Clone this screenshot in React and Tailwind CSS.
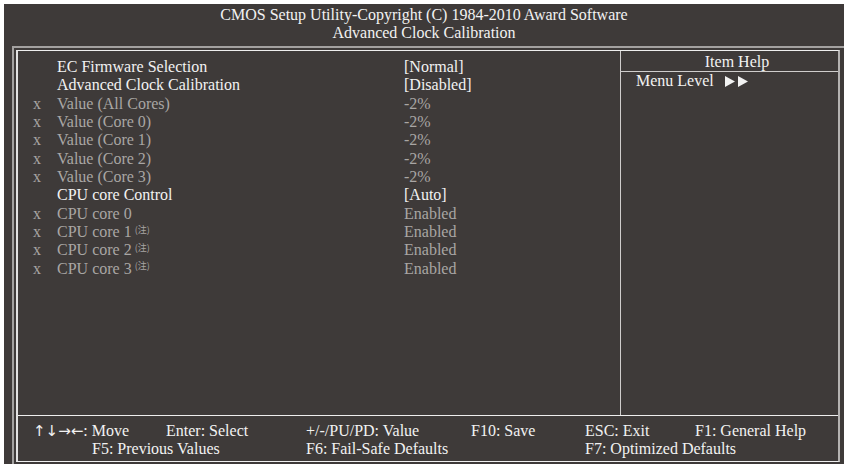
import React from "react";

const rows = [
  { label: "EC Firmware Selection", value: "[Normal]", active: true },
  { label: "Advanced Clock Calibration", value: "[Disabled]", active: true },
  { label: "Value (All Cores)", value: "-2%" },
  { label: "Value (Core 0)", value: "-2%" },
  { label: "Value (Core 1)", value: "-2%" },
  { label: "Value (Core 2)", value: "-2%" },
  { label: "Value (Core 3)", value: "-2%" },
  { label: "CPU core Control", value: "[Auto]", active: true },
  { label: "CPU core 0", value: "Enabled" },
  { label: "CPU core 1", value: "Enabled", note: true },
  { label: "CPU core 2", value: "Enabled", note: true },
  { label: "CPU core 3", value: "Enabled", note: true },
];

// rows are ~18.3px apart, so every third one gets an extra pixel
const SettingRow = ({ row, tall }) => (
  <div
    className={
      "flex items-center " +
      (tall ? "h-[19px] " : "h-[18px] ") +
      (row.active ? "text-[#f2f2f2]" : "text-[#a9a6a4]")
    }
  >
    <span className="w-[24px] pl-[15px] shrink-0">{row.active ? "" : "x"}</span>
    <span className="w-[362px] shrink-0 pl-[15px] whitespace-nowrap">
      {row.label}
      {row.note && (
        <sup className="ml-[3px] text-[9px] font-['Noto_Sans_CJK_SC',serif]">(注)</sup>
      )}
    </span>
    <span className="whitespace-nowrap">{row.value}</span>
  </div>
);

const Arrow = () => (
  <svg width="10" height="11" viewBox="0 0 10 11">
    <path d="M0 0 L10 5.5 L0 11 Z" fill="#f2f2f2" />
  </svg>
);

const App = () => {
  return (
    <div className="w-[844px] h-[464px] bg-white pt-[4px] pl-[4px] overflow-hidden font-['Liberation_Serif',serif] text-[16px] leading-[18px]">
      <div className="w-[840px] h-[460px] bg-[#3e3a39] flex flex-col">
        {/* header */}
        <div className="h-[42px] pt-[2px] text-center text-[#f2f2f2]">
          <div className="leading-[18px]">CMOS Setup Utility-Copyright (C) 1984-2010 Award Software</div>
          <div className="leading-[18px]">Advanced Clock Calibration</div>
        </div>

        {/* outer frame */}
        <div className="ml-[8px] flex-1 border-t-2 border-l-2 border-[#a3a1a0] pt-[2px] pl-[2px]">
          <div className="w-[824px] h-[412px] border-t border-b border-l-2 border-r-2 border-t-[#eeeeee] border-b-[#eeeeee] border-l-[#e2e2e2] border-r-[#b4b2b1] flex flex-col">
            {/* main */}
            <div className="h-[364px] flex">
              <div className="w-[602px] pt-[7px]">
                {rows.map((row, i) => (
                  <SettingRow key={i} row={row} tall={i % 3 === 2} />
                ))}
              </div>
              <div className="w-[1px] bg-[#cfcdcc]" />
              <div className="flex-1 text-[#f2f2f2]">
                <div className="h-[21px] border-b border-[#cfcdcc] pl-[15px] text-center leading-[21px]">
                  Item Help
                </div>
                <div className="pl-[15px] flex items-center h-[18px]">
                  <span>Menu Level</span>
                  <span className="ml-[11px] flex items-center gap-[3px]">
                    <Arrow />
                    <Arrow />
                  </span>
                </div>
              </div>
            </div>

            {/* footer */}
            <div className="flex-1 border-t border-[#eeeeee] pt-[6px] text-[#f2f2f2] leading-[17px] whitespace-nowrap">
              <div className="flex">
                <span className="w-[148px] pl-[15px]">
                  <span className="font-['DejaVu_Sans',sans-serif] text-[15px]">↑↓→←</span>: Move
                </span>
                <span className="w-[140px]">Enter: Select</span>
                <span className="w-[165px]">+/-/PU/PD: Value</span>
                <span className="w-[114px]">F10: Save</span>
                <span className="w-[110px]">ESC: Exit</span>
                <span>F1: General Help</span>
              </div>
              <div className="flex">
                <span className="w-[288px] pl-[74px]">F5: Previous Values</span>
                <span className="w-[279px]">F6: Fail-Safe Defaults</span>
                <span>F7: Optimized Defaults</span>
              </div>
            </div>
          </div>
        </div>
      </div>
    </div>
  );
};

export default App;
